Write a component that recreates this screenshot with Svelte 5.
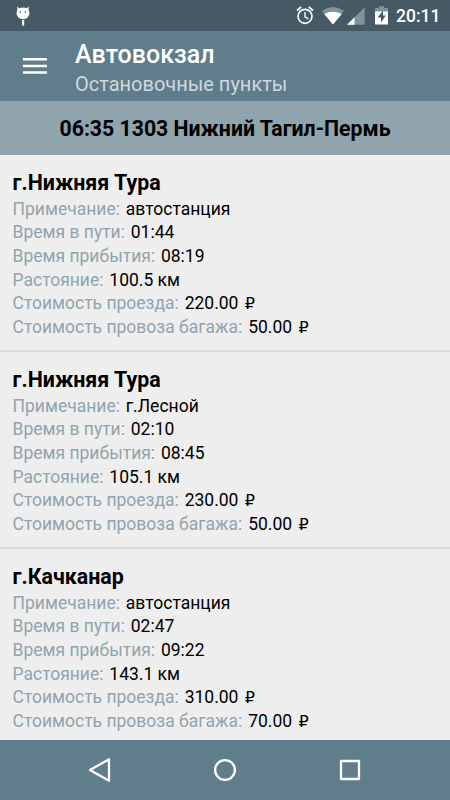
<script>
  const stops = [
    { name: 'г.Нижняя Тура', note: 'автостанция', travel: '01:44', arrival: '08:19', distance: '100.5 км', fare: '220.00', luggage: '50.00' },
    { name: 'г.Нижняя Тура', note: 'г.Лесной', travel: '02:10', arrival: '08:45', distance: '105.1 км', fare: '230.00', luggage: '50.00' },
    { name: 'г.Качканар', note: 'автостанция', travel: '02:47', arrival: '09:22', distance: '143.1 км', fare: '310.00', luggage: '70.00' }
  ];
</script>

<div class="screen">
  <div class="status">
    <svg class="bug" width="14" height="20" viewBox="0 0 14 20" fill="#fff">
      <path d="M1.1.2 3 2.3Q7 .7 11 2.3L12.9.2 12.5 3.8Q13.7 5.6 13.4 8 12.5 12.8 7 13.2 1.5 12.8.6 8 .3 5.6 1.5 3.8Z" />
      <rect x="6.1" y="14" width="2.1" height="5.6" />
      <circle cx="4.3" cy="6.1" r=".8" fill="#455a64" />
      <circle cx="9.4" cy="6.1" r=".8" fill="#455a64" />
    </svg>
    <div class="tray">
      <svg class="alarm" width="18" height="19" viewBox="0 0 18 19" fill="none" stroke="#fff">
        <circle cx="9" cy="10.3" r="7" stroke-width="1.7" />
        <path d="M9 6v4.8l3.3 2" stroke-width="1.4" />
        <path d="M1 4.5 5.2 1M17 4.5 12.8 1" stroke-width="1.8" />
      </svg>
      <svg class="wifi" width="22" height="18" viewBox="0 0 22 18">
        <path d="M0 3.8Q11-3.6 22 3.8L11 17.6Z" fill="#83929a" />
        <path d="M2.2 6.9Q11 2.6 19.8 6.9L11 17.6Z" fill="#fff" />
      </svg>
      <svg class="signal" width="18" height="18" viewBox="0 0 18 18">
        <path d="M17.7.2V17.8H0Z" fill="#83929a" />
        <path d="M7.5 10.3V17.8H0Z" fill="#fff" />
      </svg>
      <svg class="battery" width="13" height="19" viewBox="0 0 13 19">
        <path d="M4 .3h5v1.8h4V6H0V2.1h4Z" fill="#83929a" />
        <path d="M0 5.5h13V18.5H0Z" fill="#fff" />
        <path d="M8 4.6 2.7 11.4H6V16.5L10.8 9.5H8Z" fill="#455a64" />
      </svg>
      <span class="clock">20:11</span>
    </div>
  </div>

  <header>
    <svg class="menu" width="24" height="17" viewBox="0 0 24 17" fill="#fff">
      <path d="M0 .1h24v2.5H0zM0 6.7h24v2.5H0zM0 13.3h24v2.5H0z" />
    </svg>
    <div>
      <h1>Автовокзал</h1>
      <p>Остановочные пункты</p>
    </div>
  </header>

  <div class="route"><span>06:35 1303 Нижний Тагил-Пермь</span></div>

  <main>
    {#each stops as stop}
      <section>
        <h2>{stop.name}</h2>
        <div class="row"><span>Примечание:</span> {stop.note}</div>
        <div class="row"><span>Время в пути:</span> {stop.travel}</div>
        <div class="row"><span>Время прибытия:</span> {stop.arrival}</div>
        <div class="row"><span>Растояние:</span> {stop.distance}</div>
        <div class="row"><span>Стоимость проезда:</span> {stop.fare} <b>₽</b></div>
        <div class="row"><span>Стоимость провоза багажа:</span> {stop.luggage} <b>₽</b></div>
      </section>
    {/each}
  </main>

  <nav>
    <svg width="24" height="26" viewBox="0 0 24 26"><path d="M21 2.3V23.7L2 13Z" /></svg>
    <svg width="24" height="26" viewBox="0 0 24 26"><circle cx="12" cy="13" r="9.9" /></svg>
    <svg width="24" height="26" viewBox="0 0 24 26"><rect x="3" y="4" width="18" height="18" /></svg>
  </nav>
</div>

<style>
  :global(body) { margin: 0; }
  .screen {
    width: 450px;
    height: 800px;
    overflow: hidden;
    display: flex;
    flex-direction: column;
    background: #eee;
    color: #000;
    font-family: Roboto, "Noto Sans", sans-serif;
  }
  svg { display: block; flex: none; }
  .status {
    flex: none;
    height: 31px;
    box-sizing: border-box;
    padding: 6px 10px 0 16px;
    display: flex;
    justify-content: space-between;
    background: #455a64;
  }
  .tray { display: flex; align-items: flex-start; }
  .wifi { margin: 1px 0 0 8px; }
  .signal { margin: 1px 0 0 3px; }
  .battery { margin-left: 10px; }
  .clock {
    width: 44px;
    margin-left: 8px;
    white-space: nowrap;
    color: #fff;
    font-size: 17.5px;
    font-weight: 500;
    line-height: 21px;
  }
  header {
    flex: none;
    height: 70px;
    display: flex;
    background: #607d8b;
    color: #fff;
  }
  .menu { margin: 27px 28px 0 23px; }
  h1, h2, p { margin: 0; white-space: nowrap; }
  h1 { margin-top: 9px; font-size: 25px; line-height: 29px; font-weight: 500; }
  p { margin-top: 3px; font-size: 20px; line-height: 24px; color: #cfd8dc; }
  .route {
    flex: none;
    height: 54px;
    box-sizing: border-box;
    padding-top: 1px;
    display: flex;
    align-items: center;
    justify-content: center;
    background: #90a4ae;
    font-size: 21.25px;
    font-weight: 700;
    white-space: nowrap;
  }
  main { flex: 1; min-height: 0; overflow: hidden; }
  section {
    height: 197px;
    box-sizing: border-box;
    padding: 14px 12.5px 0;
    border-bottom: 2px solid #d6dcdf;
  }
  h2 { font-size: 21.4px; line-height: 28px; font-weight: 700; }
  .row { height: 23.7px; line-height: 24px; font-size: 17.5px; white-space: nowrap; }
  h2 + .row { margin-top: -0.4px; }
  .row span { margin-right: 1.5px; color: #90a4ae; }
  .row b {
    margin-left: 2px;
    font: 400 16px/1 "DejaVu Sans", sans-serif;
  }
  nav {
    flex: none;
    height: 60px;
    box-sizing: border-box;
    padding: 0 88px;
    display: flex;
    align-items: center;
    justify-content: space-between;
    background: #607d8b;
  }
  nav svg { fill: none; stroke: #fff; stroke-width: 2.3; stroke-linejoin: round; }
</style>
